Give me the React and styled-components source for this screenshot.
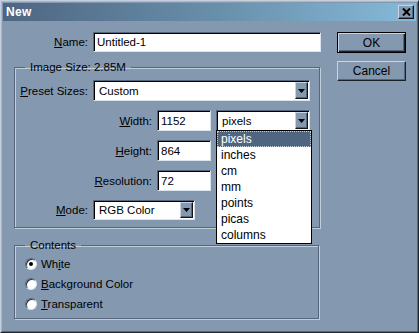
import styled, { createGlobalStyle } from "styled-components";

const GlobalStyle = createGlobalStyle`
  html, body {
    margin: 0;
    padding: 0;
    background: #8498b0;
  }
  * { box-sizing: border-box; }
`;

const Window = styled.div`
  width: 419px;
  height: 333px;
  background: #8498b0;
  border: 1px solid;
  border-color: #c4d0de #1e2630 #1e2630 #c4d0de;
  box-shadow: inset 1px 1px 0 #a8b8cc, inset -1px -1px 0 #56667c;
  padding: 2px;
  font-family: "Liberation Sans", Arial, sans-serif;
  font-size: 11.5px;
  color: #000;
`;

const TitleBar = styled.div`
  height: 18px;
  display: flex;
  align-items: center;
  justify-content: space-between;
  padding: 0 2px 0 3px;
  background: linear-gradient(90deg, #4e6582 0%, #6a92ad 55%, #86bad9 100%);
  color: #fff;
  font-weight: bold;
  font-size: 12px;
  letter-spacing: 0.3px;
`;

const CloseButton = styled.div`
  width: 16px;
  height: 14px;
  display: flex;
  align-items: center;
  justify-content: center;
  background: #8498b0;
  border: 1px solid;
  border-color: #c8d4e2 #101418 #101418 #c8d4e2;
  box-shadow: inset -1px -1px 0 #56667c;
`;

const Body = styled.div`
  display: flex;
  gap: 16px;
  padding: 11px 0 0 11px;
`;

const LeftColumn = styled.div`
  width: 307px;
  display: flex;
  flex-direction: column;
`;

const RightColumn = styled.div`
  width: 69px;
  display: flex;
  flex-direction: column;
  gap: 8px;
`;

const Row = styled.div`
  display: flex;
  align-items: center;
  height: ${(p) => p.$h || 21}px;
`;

const Label = styled.label`
  width: ${(p) => p.$w}px;
  margin-right: 5px;
  text-align: right;
  white-space: nowrap;

  u {
    text-decoration-thickness: 1px;
    text-underline-offset: 1px;
  }
`;

const sunken = `
  border: 1px solid;
  border-color: #56677d #dbe3ec #dbe3ec #56677d;
  box-shadow: inset 1px 1px 0 #000;
  background: #fff;
`;

const TextBox = styled.div`
  ${sunken}
  width: ${(p) => p.$w}px;
  height: ${(p) => p.$h || 21}px;
  padding: 0 3px;
  display: flex;
  align-items: center;
  white-space: nowrap;
`;

const SelectBox = styled.div`
  ${sunken}
  position: relative;
  width: ${(p) => p.$w}px;
  height: ${(p) => p.$h || 21}px;
  margin-left: ${(p) => p.$ml || 0}px;
  display: flex;
  align-items: center;
  justify-content: space-between;
  padding: 1px 1px 1px 5px;
`;

const ArrowButton = styled.div`
  width: 13px;
  height: 100%;
  display: flex;
  align-items: center;
  justify-content: center;
  background: #8498b0;
  border: 1px solid;
  border-color: #c8d4e2 #101418 #101418 #c8d4e2;
  box-shadow: inset -1px -1px 0 #56667c;
`;

const DropList = styled.ul`
  position: absolute;
  top: 100%;
  left: -1px;
  width: 96px;
  margin: 0;
  padding: 0;
  list-style: none;
  background: #fff;
  border: 1px solid #000;
  z-index: 2;
`;

const DropItem = styled.li`
  height: 16px;
  line-height: 14px;
  padding: 0 3px;
  border: 1px dotted ${(p) => (p.$active ? "#c8d4e2" : "transparent")};
  background: ${(p) => (p.$active ? "#4f6580" : "transparent")};
  color: ${(p) => (p.$active ? "#fff" : "#000")};
  font-size: 12px;
`;

const Group = styled.fieldset`
  margin: ${(p) => p.$mt}px 0 0;
  width: ${(p) => p.$w}px;
  padding: ${(p) => p.$pad};
  border: 1px solid #56677d;
  box-shadow: 1px 1px 0 #c0cedc, inset 1px 1px 0 #c0cedc;
  display: flex;
  flex-direction: column;
  gap: ${(p) => p.$gap || 0}px;
`;

const Legend = styled.legend`
  margin-left: 10px;
  padding: 0 5px;
  line-height: 14px;
`;

const Button = styled.div`
  height: ${(p) => (p.$default ? 21 : 20)}px;
  display: flex;
  align-items: center;
  justify-content: center;
  background: #8498b0;
  border: 1px solid;
  border-color: ${(p) =>
    p.$default ? "#000" : "#c8d4e2 #1a2028 #1a2028 #c8d4e2"};
  box-shadow: ${(p) =>
    p.$default
      ? "inset 1px 1px 0 #c8d4e2, inset -1px -1px 0 #1a2028, inset -2px -2px 0 #56667c"
      : "inset -1px -1px 0 #56667c"};
  font-size: 12px;
`;

const RadioRow = styled.div`
  height: 20px;
  display: flex;
  align-items: center;
  gap: 4px;
  padding-left: 10px;

  u {
    text-decoration-thickness: 1px;
    text-underline-offset: 1px;
  }
`;

const Radio = styled.span`
  width: 12px;
  height: 12px;
  border-radius: 50%;
  background: #fff;
  border: 1px solid;
  border-color: #56677d #dbe3ec #dbe3ec #56677d;
  box-shadow: inset 1px 1px 0 #2a3240;
  display: flex;
  align-items: center;
  justify-content: center;

  &::after {
    content: "";
    width: 4px;
    height: 4px;
    border-radius: 50%;
    background: ${(p) => (p.$checked ? "#000" : "transparent")};
  }
`;

const Arrow = () => (
  <svg width="7" height="4" viewBox="0 0 7 4">
    <path d="M0 0h7L3.5 4z" fill="#000" />
  </svg>
);

const units = ["pixels", "inches", "cm", "mm", "points", "picas", "columns"];

const App = () => {
  return (
    <>
      <GlobalStyle />
      <Window>
        <TitleBar>
          <span>New</span>
          <CloseButton>
            <svg width="9" height="8" viewBox="0 0 9 8">
              <path d="M1 0.5L8 7.5M8 0.5L1 7.5" stroke="#000" strokeWidth="2" />
            </svg>
          </CloseButton>
        </TitleBar>
        <Body>
          <LeftColumn>
            <Row $h={20}>
              <Label $w={74}>
                <u>N</u>ame:
              </Label>
              <TextBox $w={228} $h={20}>
                Untitled-1
              </TextBox>
            </Row>

            <Group $mt={8} $w={306} $pad="6px 0 7px 0" $gap={9}>
              <Legend>Image Size: 2.85M</Legend>
              <Row>
                <Label $w={73}>
                  <u>P</u>reset Sizes:
                </Label>
                <SelectBox $w={217}>
                  Custom
                  <ArrowButton>
                    <Arrow />
                  </ArrowButton>
                </SelectBox>
              </Row>
              <Row>
                <Label $w={137}>
                  <u>W</u>idth:
                </Label>
                <TextBox $w={54}>1152</TextBox>
                <SelectBox $w={94} $ml={5}>
                  pixels
                  <ArrowButton>
                    <Arrow />
                  </ArrowButton>
                  <DropList>
                    {units.map((u, i) => (
                      <DropItem key={u} $active={i === 0}>
                        {u}
                      </DropItem>
                    ))}
                  </DropList>
                </SelectBox>
              </Row>
              <Row>
                <Label $w={137}>
                  <u>H</u>eight:
                </Label>
                <TextBox $w={54}>864</TextBox>
              </Row>
              <Row>
                <Label $w={137}>
                  <u>R</u>esolution:
                </Label>
                <TextBox $w={54}>72</TextBox>
              </Row>
              <Row $h={20}>
                <Label $w={73}>
                  <u>M</u>ode:
                </Label>
                <SelectBox $w={102} $h={20}>
                  RGB Color
                  <ArrowButton>
                    <Arrow />
                  </ArrowButton>
                </SelectBox>
              </Row>
            </Group>

            <Group $mt={10} $w={305} $pad="2px 0 4px 0">
              <Legend>Contents</Legend>
              <RadioRow>
                <Radio $checked />
                <span>
                  Wh<u>i</u>te
                </span>
              </RadioRow>
              <RadioRow>
                <Radio />
                <span>
                  <u>B</u>ackground Color
                </span>
              </RadioRow>
              <RadioRow>
                <Radio />
                <span>
                  <u>T</u>ransparent
                </span>
              </RadioRow>
            </Group>
          </LeftColumn>

          <RightColumn>
            <Button $default>OK</Button>
            <Button>Cancel</Button>
          </RightColumn>
        </Body>
      </Window>
    </>
  );
};

export default App;
